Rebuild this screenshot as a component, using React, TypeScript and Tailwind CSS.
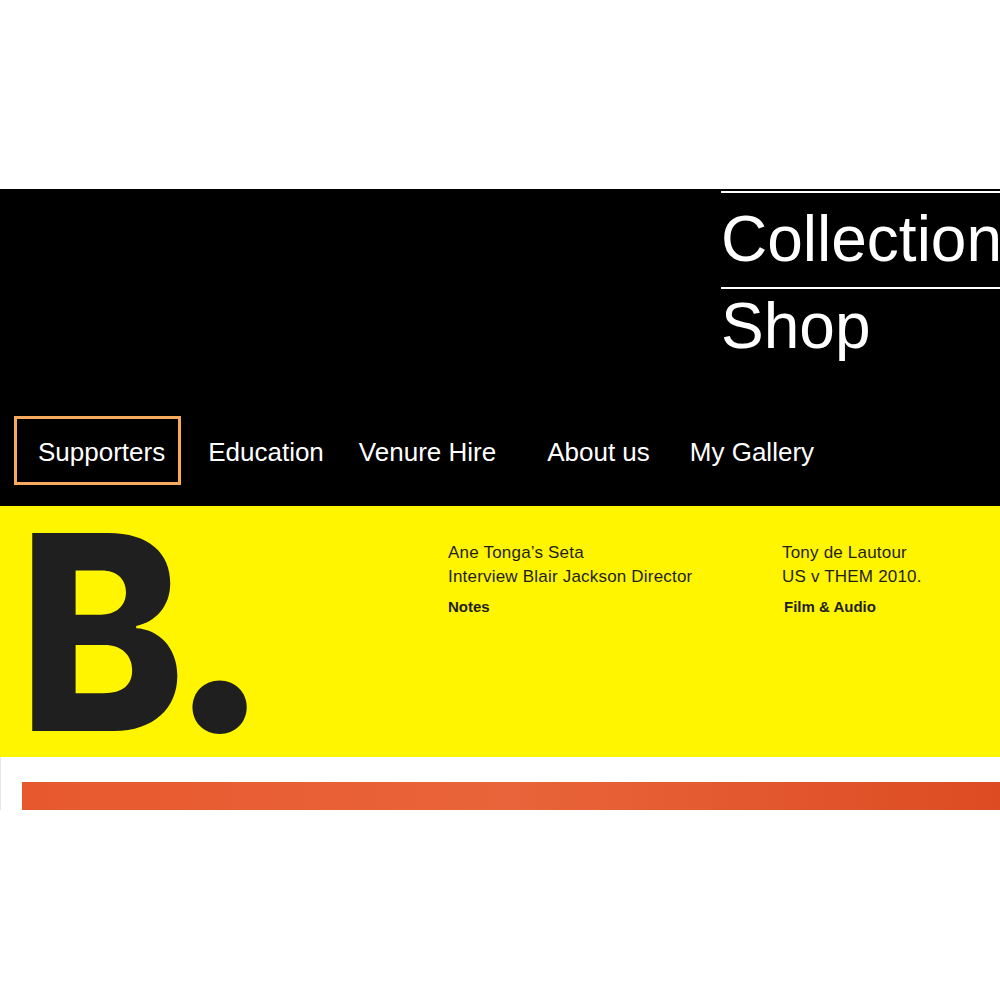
import React from "react";

const nav = [
  { label: "Supporters", ml: "ml-[14px]", pad: "pl-[21px] pr-[13px]", active: true },
  { label: "Education", ml: "ml-[27px]", pad: "", active: false },
  { label: "Venure Hire", ml: "ml-[35px]", pad: "", active: false },
  { label: "About us", ml: "ml-[51px]", pad: "", active: false },
  { label: "My Gallery", ml: "ml-[40px]", pad: "", active: false },
];

export default function App() {
  return (
    <div className="w-[1000px] h-[1000px] bg-white overflow-hidden font-['Liberation_Sans',Arial,sans-serif]">
      <div className="h-[189px]" />

      {/* Header */}
      <header className="bg-black h-[317px] flex flex-col">
        <div className="pl-[721px] pt-[2px]">
          <div className="border-t-2 border-white h-[96px] text-white text-[64px] leading-none pt-[14px] whitespace-nowrap">
            Collection
          </div>
          <div className="border-t-2 border-white h-[96px] text-white text-[64px] leading-none pt-[5px] whitespace-nowrap">
            Shop
          </div>
        </div>
        <nav className="flex items-center mt-[33px] h-[69px] text-white text-[26px]">
          {nav.map((n) => (
            <a
              key={n.label}
              href="#"
              className={
                n.active
                  ? `${n.ml} ${n.pad} h-[69px] flex items-center pt-[3px] border-[3px] border-[#f7a95c]`
                  : `${n.ml} ${n.pad} pt-[3px]`
              }
            >
              {n.label}
            </a>
          ))}
        </nav>
      </header>

      {/* Yellow feature */}
      <section className="bg-[#fff500] h-[251px] flex text-[#1f1f1f]">
        <div className="pl-[18px] pt-[18px] w-[448px] font-['Inter',sans-serif] font-extrabold text-[272px] leading-[200px] tracking-[-4px] whitespace-nowrap">
          <span className="inline-block scale-x-[0.925] origin-left">B</span>
          <span className="text-[294px] -ml-[27px]">.</span>
        </div>
        <div className="pt-[35px] w-[334px]">
          <p className="text-[17px] leading-[24px] tracking-[0.2px]">Ane Tonga’s Seta</p>
          <p className="text-[17px] leading-[24px] tracking-[0.2px]">Interview Blair Jackson Director</p>
          <p className="text-[15px] font-bold mt-[7px]">Notes</p>
        </div>
        <div className="pt-[35px]">
          <p className="text-[17px] leading-[24px] tracking-[0.2px]">Tony de Lautour</p>
          <p className="text-[17px] leading-[24px] tracking-[0.2px]">US v THEM 2010.</p>
          <p className="text-[15px] font-bold mt-[7px] ml-[2px]">Film &amp; Audio</p>
        </div>
      </section>

      {/* Next item */}
      <div className="border-l border-gray-200 h-[53px] pt-[25px]">
        <div className="ml-[21px] h-[28px] bg-gradient-to-r from-[#e8582e] via-[#e9643a] to-[#dd4b22]" />
      </div>
    </div>
  );
}
